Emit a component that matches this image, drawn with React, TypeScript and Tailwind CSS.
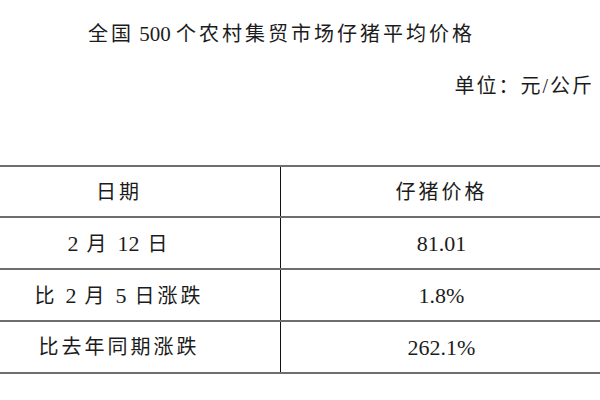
import React from "react";

function Mixed({ text, num, re }: { text: string; num: string; re: RegExp }) {
  const parts = text.split(re);
  return (
    <>
      {parts.map((p, i) =>
        /[0-9]/.test(p) ? (
          <span key={i} className={`tracking-normal ${num}`}>
            {p}
          </span>
        ) : (
          <React.Fragment key={i}>{p}</React.Fragment>
        )
      )}
    </>
  );
}

export default function App() {
  const font = { fontFamily: '"Liberation Serif", "Noto Sans CJK SC", serif' };
  const rows: [string, string][] = [
    ["2 月 12 日", "81.01"],
    ["比 2 月 5 日涨跌", "1.8%"],
    ["比去年同期涨跌", "262.1%"],
  ];
  return (
    <div className="w-[600px] h-[400px] overflow-hidden bg-white text-[#1c1c1c]" style={font}>
      <div className="pt-[20px] pl-[88px] text-[20px] leading-[28px] tracking-[3px] whitespace-pre">
        <Mixed text="全国 500 个农村集贸市场仔猪平均价格" num="text-[21px]" re={/([ 0-9.%]*[0-9][ 0-9.%]*)/} />
      </div>
      <div className="mt-[24px] flex justify-end pr-[6px] text-[20px] leading-[28px] tracking-[2px]">
        单位：元/公斤
      </div>
      <div className="mt-[65px] -ml-[42px] w-[644px] border-t-2 border-[#6e6e6e]">
        <div className="grid grid-cols-[323px_321px] h-[51px] border-b-2 border-[#6e6e6e]">
          <div className="flex items-center justify-center border-r border-[#111] text-[20px] tracking-[3px]">
            日期
          </div>
          <div className="flex items-center justify-center text-[20px] tracking-[3px]">仔猪价格</div>
        </div>
        {rows.map(([a, b]) => (
          <div key={a} className="grid grid-cols-[323px_321px] h-[52px] border-b-2 border-[#6e6e6e]">
            <div className="flex items-center justify-center border-r border-[#111] text-[20px] tracking-[3px] whitespace-pre">
              <span>
                <Mixed text={a} num="text-[22px]" re={/([0-9.%]+)/} />
              </span>
            </div>
            <div className="flex items-center justify-center text-[22px]">{b}</div>
          </div>
        ))}
      </div>
    </div>
  );
}
